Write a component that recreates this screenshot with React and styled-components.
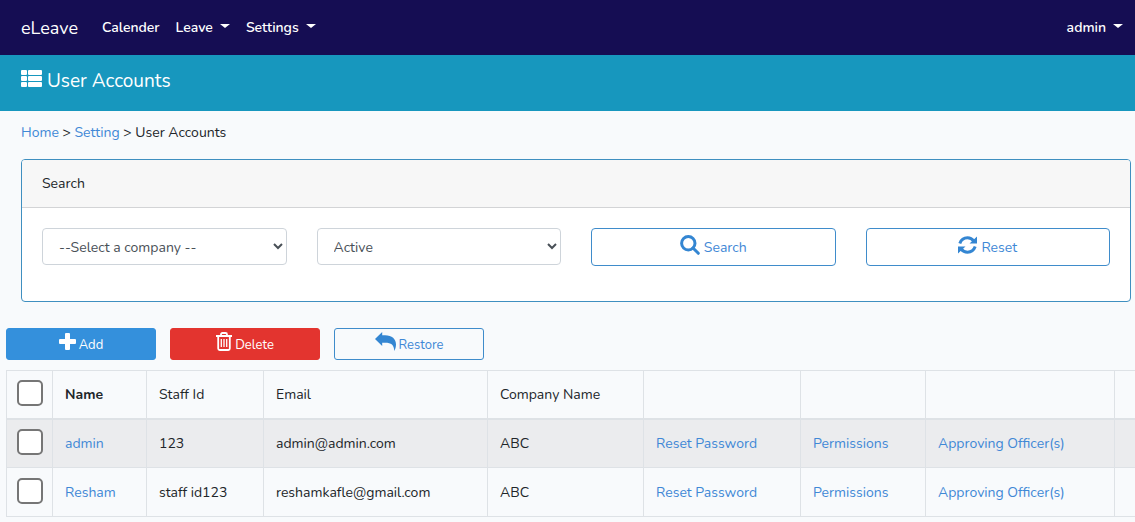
import React from "react";
import styled, { createGlobalStyle, css } from "styled-components";

const GlobalStyle = createGlobalStyle`
  *, *::before, *::after { box-sizing: border-box; }
  body {
    margin: 0;
    background: #f8fafc;
    color: #212529;
    font-family: "Nunito", "Open Sans", "Liberation Sans", sans-serif;
    font-size: 14px;
    line-height: 23px;
    overflow-x: hidden;
  }
  a { color: #3f88d6; text-decoration: none; }
`;

const Navbar = styled.nav`
  display: flex;
  align-items: center;
  height: 55px;
  padding: 0 12px 0 21px;
  background: #150d53;
`;

const Brand = styled.a`
  && { color: #fff; }
  margin-right: 24px;
  font-size: 18px;
  line-height: 28px;
`;

const NavLinks = styled.div`
  display: flex;
  flex: 1;
  gap: 16px;
`;

const navItem = css`
  display: flex;
  align-items: center;
  padding: 0;
  border: 0;
  background: none;
  color: #fff;
  font: inherit;
  font-weight: 600;
`;

const NavLink = styled.a`
  && { ${navItem} }
`;

const NavToggle = styled.button`
  ${navItem}
  &::after {
    content: "";
    margin: 0 0 3px 7px;
    border: 5px solid transparent;
    border-top: 4px solid #fff;
    border-bottom: 0;
  }
`;

const TitleBar = styled.header`
  display: flex;
  height: 56px;
  padding: 12px 21px;
  background: #1797be;
`;

const Title = styled.h1`
  display: flex;
  gap: 5px;
  margin: 0;
  color: #fff;
  font-size: 19px;
  font-weight: 400;
  line-height: 28px;
`;

const Breadcrumb = styled.nav`
  padding: 10px 21px 15px;
`;

const Card = styled.section`
  margin: 0 4px 26px 21px;
  border: 1px solid #3f8fc0;
  border-radius: 4px;
  background: #fff;
  overflow: hidden;
`;

const CardHeader = styled.h2`
  margin: 0;
  padding: 12px 20px;
  border-bottom: 1px solid #d3d4d6;
  background: #f7f7f7;
  font-size: 14px;
  font-weight: 400;
`;

const Filters = styled.form`
  display: grid;
  grid-template-columns: repeat(4, 1fr);
  align-items: start;
  gap: 30px;
  padding: 20px 20px 35px;
`;

const Select = styled.select`
  width: 100%;
  height: 37px;
  padding: 1px 12px 0;
  border: 1px solid #ced4da;
  border-radius: 4px;
  background: #fff;
  color: #495057;
  font: inherit;
`;

const variants = {
  primary: css`border-color: #3490dc; background: #3490dc; color: #fff;`,
  danger: css`border-color: #e3342f; background: #e3342f; color: #fff;`,
  outline: css`border-color: #3f8ccb; background: transparent; color: #3f88d6;`,
};

const Button = styled.button`
  display: flex;
  justify-content: center;
  align-items: center;
  gap: ${(p) => (p.$small ? "3px" : "4px")};
  width: ${(p) => (p.$small ? "150px" : "100%")};
  height: ${(p) => (p.$small ? "32px" : "38px")};
  padding: ${(p) => (p.$small ? "3px 0 0" : "0")};
  border: 1px solid;
  border-radius: ${(p) => (p.$small ? "3px" : "4px")};
  font: inherit;
  font-size: ${(p) => (p.$small ? "13px" : "14px")};
  ${(p) => variants[p.$variant]}
  svg {
    margin-bottom: ${(p) => (p.$small ? "8px" : "5px")};
    color: ${(p) => (p.$variant === "outline" ? "#3486d2" : "inherit")};
  }
`;

const Actions = styled.div`
  display: flex;
  gap: 14px;
  padding: 0 6px 10px;
`;

const TableWrap = styled.div`
  margin-left: 6px;
  overflow: hidden;
`;

const Table = styled.table`
  width: 1180px;
  border-collapse: collapse;
  table-layout: fixed;
`;

const Col = styled.col`
  width: ${(p) => p.$w}px;
`;

const Th = styled.th`
  height: 48px;
  padding: 0 12px;
  border: 1px solid #dee2e6;
  border-bottom-width: 2px;
  font-weight: ${(p) => (p.$bold ? 700 : 400)};
  text-align: left;
  white-space: nowrap;
`;

const Td = styled.td`
  height: 49px;
  padding: 0 12px;
  border: 1px solid #dee2e6;
  white-space: nowrap;
`;

const Row = styled.tr`
  &:nth-child(odd) { background: #ebecee; }
`;

const Checkbox = styled.input`
  appearance: none;
  display: block;
  width: 26px;
  height: 26px;
  margin: 0 0 3px -2px;
  border: 2px solid #767676;
  border-radius: 5px;
  background: #fff;
`;

const Svg = ({ w, h, box, children }) => (
  <svg width={w} height={h} viewBox={box} fill="currentColor" aria-hidden="true">
    {children}
  </svg>
);

const ListIcon = () => (
  <Svg w="21" h="21" box="0 0 21 21">
    <rect x="0" y="3" width="6" height="5" rx="1" />
    <rect x="7" y="3" width="14" height="5" rx="1" />
    <rect x="0" y="9" width="6" height="5" rx="1" />
    <rect x="7" y="9" width="14" height="5" rx="1" />
    <rect x="0" y="15" width="6" height="5" rx="1" />
    <rect x="7" y="15" width="14" height="5" rx="1" />
  </Svg>
);

const SearchIcon = () => (
  <Svg w="20" h="20" box="0 0 20 20">
    <circle cx="8.3" cy="8.3" r="6.7" fill="none" stroke="currentColor" strokeWidth="3" />
    <path d="M13 13L18.3 18.3" stroke="currentColor" strokeWidth="3" strokeLinecap="round" />
  </Svg>
);

const RefreshIcon = () => (
  <Svg w="19" h="18" box="0 0 19 18">
    <g fill="none" stroke="currentColor" strokeWidth="3">
      <path d="M1.800 7.400C3.200 3.500 6 1.800 9.500 1.800C12.300 1.800 14.300 3 15.800 5" />
      <path d="M17.200 10.600C15.800 14.500 13 16.200 9.500 16.200C6.700 16.200 4.700 15 3.200 13" />
    </g>
    <path d="M19 0.500V7.500H11.500ZM0 17.500V10.500H7.500Z" />
  </Svg>
);

const PlusIcon = () => (
  <Svg w="17" h="17" box="0 0 17 17">
    <path d="M7 0h3a1 1 0 0 1 1 1v5h5a1 1 0 0 1 1 1v3a1 1 0 0 1-1 1h-5v5a1 1 0 0 1-1 1H7a1 1 0 0 1-1-1v-5H1a1 1 0 0 1-1-1V7a1 1 0 0 1 1-1h5V1a1 1 0 0 1 1-1z" />
  </Svg>
);

const TrashIcon = () => (
  <Svg w="16" h="19" box="0 0 16 19">
    <g fill="none" stroke="currentColor" strokeWidth="1.8" strokeLinejoin="round">
      <path d="M0 4h16M5 4V2.500Q5 1 6.500 1h3Q11 1 11 2.500V4M2.200 4v12.500Q2.200 18 3.700 18h8.600q1.500 0 1.500-1.500V4" />
      <path d="M5.300 7v8M8 7v8M10.700 7v8" strokeWidth="1.300" />
    </g>
  </Svg>
);

const ReplyIcon = () => (
  <Svg w="21" h="19" box="0 0 21 19">
    <path d="M0 7L7.200 0V3.300H10C17 3.300 21 7.200 21 12.500C21 15 20.300 17 19.300 19C19 13 16.500 10.800 10 10.800H7.200V14Z" />
  </Svg>
);

const rows = [
  { name: "admin", staff: "123", email: "admin@admin.com", company: "ABC" },
  { name: "Resham", staff: "staff id123", email: "reshamkafle@gmail.com", company: "ABC" },
];

const columns = [46, 94, 117, 224, 156, 157, 125, 189, 72];

export default function App() {
  return (
    <>
      <GlobalStyle />
      <Navbar>
        <Brand href="#">eLeave</Brand>
        <NavLinks>
          <NavLink href="#">Calender</NavLink>
          <NavToggle type="button">Leave</NavToggle>
          <NavToggle type="button">Settings</NavToggle>
        </NavLinks>
        <NavToggle type="button">admin</NavToggle>
      </Navbar>
      <TitleBar>
        <Title><ListIcon />User Accounts</Title>
      </TitleBar>
      <main>
        <Breadcrumb aria-label="Breadcrumb">
          <a href="#">Home</a> &gt; <a href="#">Setting</a> &gt; User Accounts
        </Breadcrumb>
        <Card>
          <CardHeader>Search</CardHeader>
          <Filters onSubmit={(e) => e.preventDefault()}>
            <Select aria-label="Company" defaultValue="">
              <option value="">--Select a company --</option>
              <option value="abc">ABC</option>
            </Select>
            <Select aria-label="Status" defaultValue="active">
              <option value="active">Active</option>
              <option value="inactive">Inactive</option>
            </Select>
            <Button type="submit" $variant="outline"><SearchIcon />Search</Button>
            <Button type="reset" $variant="outline"><RefreshIcon />Reset</Button>
          </Filters>
        </Card>
        <Actions>
          <Button type="button" $small $variant="primary"><PlusIcon />Add</Button>
          <Button type="button" $small $variant="danger"><TrashIcon />Delete</Button>
          <Button type="button" $small $variant="outline"><ReplyIcon />Restore</Button>
        </Actions>
        <TableWrap>
          <Table>
            <colgroup>
              {columns.map((w, i) => <Col key={i} $w={w} />)}
            </colgroup>
            <thead>
              <tr>
                <Th><Checkbox type="checkbox" aria-label="Select all users" /></Th>
                <Th $bold>Name</Th>
                <Th>Staff Id</Th>
                <Th>Email</Th>
                <Th>Company Name</Th>
                <Th /><Th /><Th /><Th />
              </tr>
            </thead>
            <tbody>
              {rows.map((r) => (
                <Row key={r.name}>
                  <Td><Checkbox type="checkbox" aria-label={`Select ${r.name}`} /></Td>
                  <Td><a href="#">{r.name}</a></Td>
                  <Td>{r.staff}</Td>
                  <Td>{r.email}</Td>
                  <Td>{r.company}</Td>
                  <Td><a href="#">Reset Password</a></Td>
                  <Td><a href="#">Permissions</a></Td>
                  <Td><a href="#">Approving Officer(s)</a></Td>
                  <Td />
                </Row>
              ))}
            </tbody>
          </Table>
        </TableWrap>
      </main>
    </>
  );
}
